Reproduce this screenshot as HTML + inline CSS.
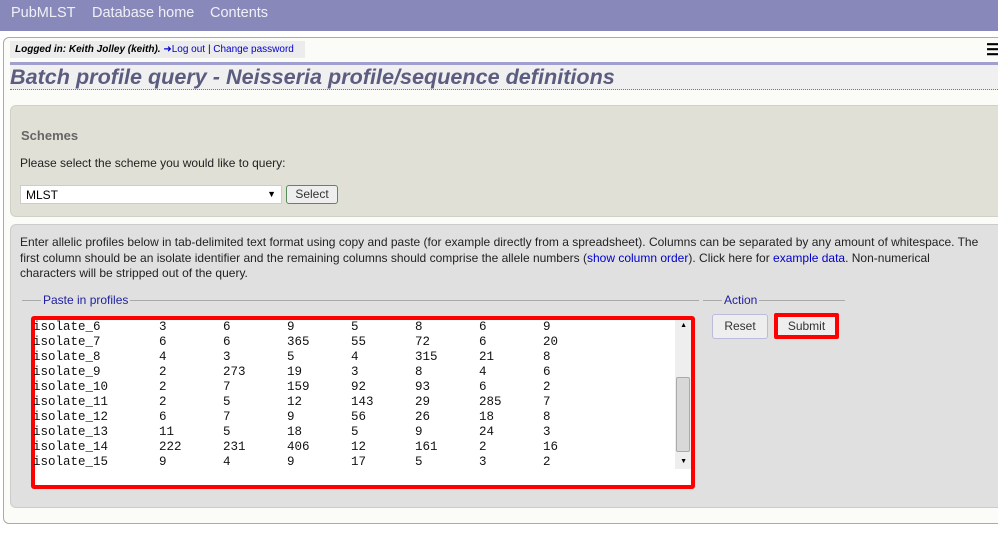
<!DOCTYPE html>
<html><head><meta charset="utf-8"><style>
*{box-sizing:border-box}
body{margin:0;width:998px;height:544px;background:#fff;font-family:"Liberation Sans",Arial,sans-serif;position:relative;overflow:hidden}
.abs{position:absolute}
.top{left:0;top:0;width:998px;height:31px;background:#8888bb;color:#f0f0f8;font-size:14.5px}
.top span{position:absolute;top:5px}
.main{left:3px;top:37px;width:1010px;height:487px;border:1px solid #aaa;border-radius:6px;background:#fbfbf7}
.login{left:10px;top:41px;width:295px;height:17px;background:#ececec;font-size:10px;font-style:italic;padding:3px 0 0 5px}
.login a{color:#0000cc;font-style:normal}
.pl{left:10px;top:62px;width:990px;height:3px;background:#a0a0d0}
.title{left:10px;top:65px;width:990px;height:25px;background:#f0f0f0;border-bottom:1px dotted #777;font-size:21.6px;font-weight:bold;font-style:italic;color:#5c5c80;line-height:24px}
.box1{left:10px;top:105px;width:1000px;height:112px;background:#e0e0d6;border:1px solid #d0d0c8;border-radius:6px}
.box2{left:10px;top:224px;width:1000px;height:284px;background:#e0e0e0;border:1px solid #ccc;border-radius:6px}
.t12{font-size:12px;color:#222}
a{color:#0000cc;text-decoration:none}
.legend{font-size:12px;color:#2020a0;background:#e0e0e0;padding:0 2px}
.ta{left:31px;top:316px;width:664px;height:173px;border:4px solid #f00;border-radius:3px;background:#fff}
.row{position:absolute;left:-2px;font-family:"Liberation Mono",monospace;font-size:12.5px;color:#111;white-space:nowrap}
.row span{display:inline-block;width:64px}
.row span:first-child{width:126px}
</style></head><body>
<div class="abs top"><span style="left:11px">PubMLST</span><span style="left:92px">Database home</span><span style="left:210px">Contents</span></div>
<div class="abs main"></div>
<div class="abs login"><b>Logged in: Keith Jolley (keith).</b> <a>&#10140;Log out</a> | <a>Change password</a></div>
<div class="abs" style="left:986px;top:40px;font-size:16px;font-weight:bold">&#9776;</div>
<div class="abs pl"></div>
<div class="abs title">Batch profile query - Neisseria profile/sequence definitions</div>
<div class="abs box1"></div>
<div class="abs" style="left:21px;top:128px;font-size:13px;font-weight:bold;color:#666">Schemes</div>
<div class="abs t12" style="left:20px;top:156px">Please select the scheme you would like to query:</div>
<div class="abs" style="left:20px;top:185px;width:262px;height:19px;background:#fff;border:1px solid #ccc;font-size:12px;padding:2px 5px">MLST<span style="position:absolute;right:5px;top:3px;font-size:9px">&#9660;</span></div>
<div class="abs" style="left:286px;top:185px;width:52px;height:19px;border:1px solid #5a8a5a;border-radius:3px;background:#eee;font-size:12px;text-align:center;line-height:17px;color:#333">Select</div>
<div class="abs box2"></div>
<div class="abs t12" style="left:20px;top:235px;width:962px;line-height:15.5px">Enter allelic profiles below in tab-delimited text format using copy and paste (for example directly from a spreadsheet). Columns can be separated by any amount of whitespace. The first column should be an isolate identifier and the remaining columns should comprise the allele numbers (<a>show column order</a>). Click here for <a>example data</a>. Non-numerical characters will be stripped out of the query.</div>
<div class="abs" style="left:22px;top:300px;width:677px;height:1px;background:#aaa"></div>
<div class="abs legend" style="left:41px;top:293px">Paste in profiles</div>
<div class="abs" style="left:703px;top:300px;width:142px;height:1px;background:#aaa"></div>
<div class="abs legend" style="left:722px;top:293px">Action</div>
<div class="abs ta">
<div class="row" style="top:0px"><span>isolate_6</span><span>3</span><span>6</span><span>9</span><span>5</span><span>8</span><span>6</span><span>9</span></div>
<div class="row" style="top:15px"><span>isolate_7</span><span>6</span><span>6</span><span>365</span><span>55</span><span>72</span><span>6</span><span>20</span></div>
<div class="row" style="top:30px"><span>isolate_8</span><span>4</span><span>3</span><span>5</span><span>4</span><span>315</span><span>21</span><span>8</span></div>
<div class="row" style="top:45px"><span>isolate_9</span><span>2</span><span>273</span><span>19</span><span>3</span><span>8</span><span>4</span><span>6</span></div>
<div class="row" style="top:60px"><span>isolate_10</span><span>2</span><span>7</span><span>159</span><span>92</span><span>93</span><span>6</span><span>2</span></div>
<div class="row" style="top:75px"><span>isolate_11</span><span>2</span><span>5</span><span>12</span><span>143</span><span>29</span><span>285</span><span>7</span></div>
<div class="row" style="top:90px"><span>isolate_12</span><span>6</span><span>7</span><span>9</span><span>56</span><span>26</span><span>18</span><span>8</span></div>
<div class="row" style="top:105px"><span>isolate_13</span><span>11</span><span>5</span><span>18</span><span>5</span><span>9</span><span>24</span><span>3</span></div>
<div class="row" style="top:120px"><span>isolate_14</span><span>222</span><span>231</span><span>406</span><span>12</span><span>161</span><span>2</span><span>16</span></div>
<div class="row" style="top:135px"><span>isolate_15</span><span>9</span><span>4</span><span>9</span><span>17</span><span>5</span><span>3</span><span>2</span></div>
<div style="position:absolute;right:0;top:0;width:16px;height:149px;background:#eee"></div>
<div style="position:absolute;right:1px;top:57px;width:14px;height:75px;background:#d8d8d8;border:1px solid #aaa;border-radius:2px"></div>
<div style="position:absolute;right:4px;top:2px;font-size:7px">&#9650;</div>
<div style="position:absolute;right:4px;top:138px;font-size:7px">&#9660;</div>
</div>
<div class="abs" style="left:712px;top:314px;width:56px;height:25px;border:1px solid #bbd;border-radius:3px;background:#eee;font-size:12px;text-align:center;line-height:23px;color:#333">Reset</div>
<div class="abs" style="left:774px;top:313px;width:65px;height:26px;border:4px solid #f00;border-radius:2px;background:#eee;font-size:12px;text-align:center;line-height:18px;color:#333">Submit</div>
</body></html>
